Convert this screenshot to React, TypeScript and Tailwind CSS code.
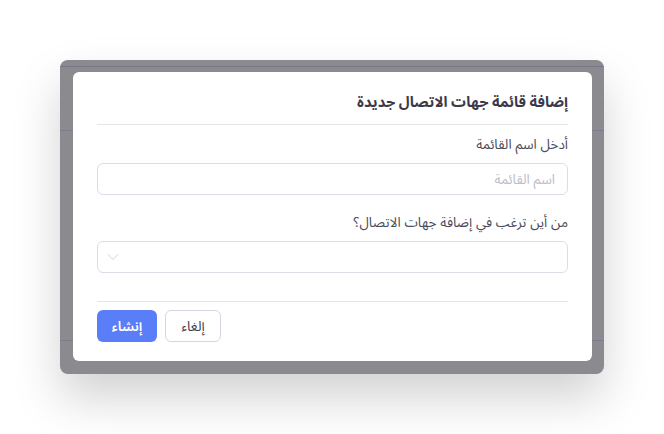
import { ChevronDown } from "lucide-react";

export default function App() {
  return (
    <div
      className="w-[664px] h-[434px] bg-white pt-[60px] pl-[60px] overflow-hidden"
      style={{ fontFamily: "Inter, 'Noto Sans Arabic', 'Noto Sans', 'DejaVu Sans', sans-serif" }}
    >
      <div className="relative w-[544px] h-[314px] rounded-lg bg-[#8b8a8f] shadow-[0_24px_48px_rgba(0,0,0,0.18)] overflow-hidden">
        {/* page behind the overlay */}
        <div className="flex flex-col">
          <div className="h-[7px] border-b border-[#76768a]" />
          <div className="h-[64px] border-b border-[#7c7b90]" />
          <div className="h-[210px] border-b border-[#7c7b90]" />
        </div>

        <div
          dir="rtl"
          className="absolute left-[13px] top-[12px] w-[519px] rounded-md bg-white px-6 pt-[19px] pb-[19px] flex flex-col"
        >
          <h2 className="text-[14.7px] leading-[22px] font-bold text-[#3a3a4a] pb-[11px] border-b border-[#e4e4ea]">
            إضافة قائمة جهات الاتصال جديدة
          </h2>

          <label className="mt-[9px] text-[13.5px] leading-5 text-[#4b4b58]">أدخل اسم القائمة</label>
          <input
            placeholder="اسم القائمة"
            className="mt-[9px] h-8 rounded-md border border-[#dcdbe7] px-3 text-[13.5px] text-[#3a3a48] placeholder:text-[#bcbccb] outline-none"
          />

          <label className="mt-[17px] text-[13.5px] leading-5 text-[#4b4b58]">من أين ترغب في إضافة جهات الاتصال؟</label>
          <div className="mt-[9px] h-8 rounded-md border border-[#dcdbe7] flex items-center justify-end pl-[5px]">
            <ChevronDown size={20} strokeWidth={0.9} className="text-[#c2c2cf]" />
          </div>

          <div className="mt-7 border-t border-[#e4e4ea] pt-2 flex justify-end gap-2">
            <button className="h-8 w-14 rounded-md border border-[#d6d5e3] bg-white text-[13.5px] text-[#3a3a48]">
              إلغاء
            </button>
            <button className="h-8 w-[60px] rounded-md bg-[#5a7ef7] text-[13.5px] font-semibold text-white">
              إنشاء
            </button>
          </div>
        </div>
      </div>
    </div>
  );
}
